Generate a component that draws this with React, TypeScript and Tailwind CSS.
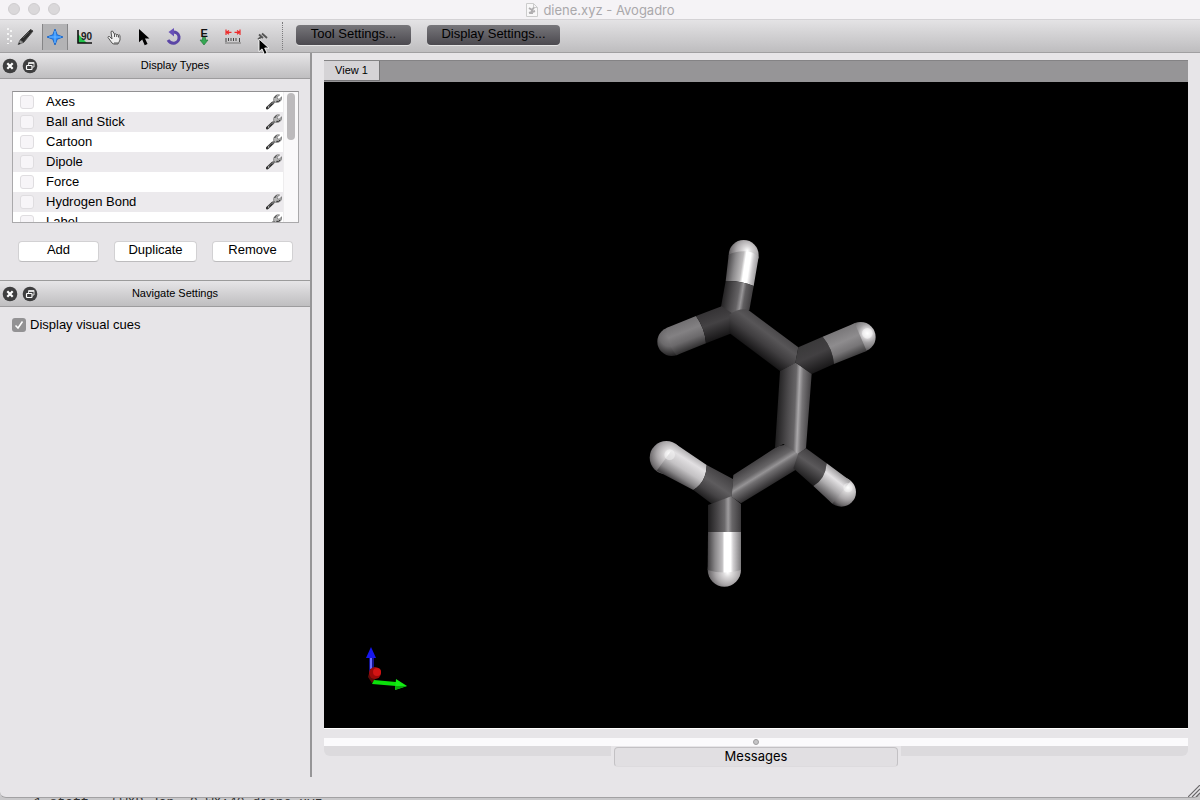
import React from "react";

const displayTypes = [
  { name: "Axes", settings: true },
  { name: "Ball and Stick", settings: true },
  { name: "Cartoon", settings: true },
  { name: "Dipole", settings: true },
  { name: "Force", settings: false },
  { name: "Hydrogen Bond", settings: true },
  { name: "Label", settings: true },
];

function Wrench() {
  return (
    <svg viewBox="0 0 48 48" className="h-4 w-4" aria-hidden="true">
      <path d="M4 42 L20 27" stroke="#333" strokeWidth="9" strokeLinecap="round" />
      <path d="M6 38 L19 26" stroke="#858585" strokeWidth="2" />
      <path d="M18 29 L30 19" stroke="#6b6b6b" strokeWidth="6" />
      <path d="M23 20 Q21 6 35 2 L41 3 L33 9 L35 15 L41 15 L47 8 Q50 18 40 24 Q32 26 28 25Z" fill="#b5b5b5" stroke="#6a6a6a" strokeWidth="2" />
      <path d="M26 12 Q28 7 32 5 M31 22 Q38 24 43 18" stroke="#2b2b2b" strokeWidth="3" fill="none" />
      <circle cx="8" cy="39" r="2" fill="#ddd" />
    </svg>
  );
}

function Arrow() {
  return <path d="M0 0 V14 L3.4 11 L6 17 L9 15.700 L6.300 10 H11 Z" />;
}

const tools: { name: string; icon: React.ReactNode; active?: boolean }[] = [
  {
    name: "Draw",
    icon: (
      <>
        <path d="M6 14 L16.500 3.500 L19 5 L9.500 16.500Z" fill="#2c2c2c" stroke="#444" />
        <path d="M9 12 L15 6" stroke="#555" strokeWidth="1" />
        <path d="M6 14 L9.500 16.500 L4 18.500Z" fill="#999" stroke="#555" strokeWidth=".7" />
        <path d="M4 18.500 L5.500 16.500 L6.500 18Z" fill="#222" />
      </>
    ),
  },
  {
    name: "Navigate",
    active: true,
    icon: (
      <>
        <path d="M11 3 L13.200 8.800 L19 11 L13.200 13.200 L11 19 L8.800 13.200 L3 11 L8.800 8.800Z" fill="#2e8dfa" stroke="#1763c5" strokeWidth=".9" />
        <path d="M11 5 V17 M5 11 H17" stroke="#65b4ff" strokeWidth="1.2" />
      </>
    ),
  },
  {
    name: "Bond centric manipulation",
    icon: (
      <>
        <path d="M4 8 L13 17 H4Z" fill="#22c24b" />
        <path d="M4 4 V17 H18" fill="none" stroke="#111" strokeWidth="1.600" />
        <text x="7" y="13.500" fontSize="10" fontWeight="bold" fill="#222" fontFamily="Liberation Sans, sans-serif">90</text>
      </>
    ),
  },
  {
    name: "Manipulate",
    icon: (
      <>
        <path d="M9 13 L6.500 10.500 Q5 10 5 11.500 L9 17 Q10 18 11 18 H15 L17 14 V9.500 Q16.500 8.500 15.500 9.300 Q15 8 13.700 8.600 Q13 7.500 11.500 8 L9.500 5 Q8.500 4.500 8 6Z" fill="#eee" stroke="#555" />
        <path d="M11.500 8 V11 M13.700 8.600 V11 M15.500 9.300 V11.500 M11 17 H15" stroke="#555" />
      </>
    ),
  },
  { name: "Select", icon: <g transform="translate(6 3) scale(.95)"><Arrow /></g> },
  {
    name: "Auto rotate",
    icon: (
      <>
        <path d="M5 14 Q7.500 18 12 17 Q16.500 15.500 16 10.500 Q15 6 10 6" fill="none" stroke="#5b46a6" strokeWidth="3" />
        <path d="M11 2 V10.500 L5.500 6Z" fill="#6851b8" />
      </>
    ),
  },
  {
    name: "Auto optimization",
    icon: (
      <>
        <text x="7.500" y="10.500" fontSize="11" fontWeight="bold" fill="#111" fontFamily="Liberation Sans, sans-serif">E</text>
        <path d="M9.500 11.500 H12.500 V14 H15 L11 19 L7 14 H9.500Z" fill="#35a853" stroke="#267a3c" strokeWidth=".7" />
      </>
    ),
  },
  {
    name: "Measure",
    icon: (
      <>
        <path d="M4 3.500 V9 M18 3.500 V9 M4 6.300 H9.500 M12.500 6.300 H18 M7 4.500 L4.500 6.300 L7 8.200 M15 4.500 L17.500 6.300 L15 8.200" fill="none" stroke="#ed2b2b" strokeWidth="1.200" />
        <path d="M4 12 V16 M6.500 12 V15 M9 12 V15 M11.500 12 V15 M14 12 V15 M17.500 12 V16" stroke="#444" />
        <path d="M3 17 H19" stroke="#777" />
      </>
    ),
  },
  {
    name: "Align",
    icon: (
      <path d="M7 8.500 L11 12 M10 7.500 L15 12 M6 13.500 L9 11" stroke="#555" strokeWidth="1.800" />
    ),
  },
];

function DockHeader({ title }: { title: string }) {
  return (
    <header className="flex h-[26px] shrink-0 items-center border-b border-b-[#9d9c9e] bg-linear-to-b from-[#e6e5e7] to-[#bfbec0] px-[2px]">
      <button aria-label={"Close " + title} className="mr-1 h-4 w-4">
        <svg viewBox="0 0 16 16">
          <circle cx="8" cy="8" r="7.300" fill="#3e3e3f" />
          <path d="M5.300 5.300 L10.700 10.700 M10.700 5.300 L5.300 10.700" stroke="white" strokeWidth="2.200" />
        </svg>
      </button>
      <button aria-label={"Detach " + title} className="h-4 w-4">
        <svg viewBox="0 0 16 16">
          <circle cx="8" cy="8" r="7.300" fill="#3e3e3f" />
          <path d="M6.500 7 V4.500 H12 V9 H10.500 M6.500 5.500 H12" fill="none" stroke="#ddd" />
          <rect x="4.500" y="7.500" width="5.500" height="4" rx=".7" fill="#3e3e3f" stroke="white" strokeWidth="1.200" />
        </svg>
      </button>
      <h2 className="flex-1 pl-1 text-center text-[11px]">{title}</h2>
    </header>
  );
}

type Stop = [number, string];

function Shade({ id, at, stops }: { id: string; at: [number, number, number, number]; stops: Stop[] }) {
  return (
    <linearGradient id={id} gradientUnits="userSpaceOnUse" x1={at[0]} y1={at[1]} x2={at[2]} y2={at[3]}>
      {stops.map(([offset, color]) => <stop key={offset} offset={offset} stopColor={color} />)}
    </linearGradient>
  );
}

function Glow({ id, at, stops }: { id: string; at: [number, number, number]; stops: Stop[] }) {
  return (
    <radialGradient id={id} gradientUnits="userSpaceOnUse" cx={at[0]} cy={at[1]} r={at[2]}>
      {stops.map(([offset, color]) => <stop key={offset} offset={offset} stopColor={color} />)}
    </radialGradient>
  );
}

const ball: Stop[] = [[0, "#fff"], [0.2, "#dcdadb"], [0.55, "#aaa7a9"], [0.85, "#6d6a6c"], [1, "#3a383a"]];

function Molecule() {
  return (
    <g transform="translate(316 148) scale(.33333)">
      <defs>
        <Shade id="h1" at={[260, 110, 351, 124]} stops={[[0, "#454345"], [0.25, "#8c8a8c"], [0.48, "#bdbbbc"], [0.57, "#fff"], [0.72, "#fff"], [0.84, "#c9c7c9"], [1, "#969496"]]} />
        <Shade id="c1" at={[249, 192, 334, 206]} stops={[[0, "#232223"], [0.3, "#4b494b"], [0.52, "#656365"], [0.65, "#989698"], [0.76, "#605e60"], [1, "#413f41"]]} />
        <Shade id="h2" at={[121, 276, 154, 360]} stops={[[0, "#716f71"], [0.35, "#838183"], [0.65, "#6b696b"], [1, "#2c2b2c"]]} />
        <Shade id="c2" at={[207, 243, 237, 325]} stops={[[0, "#353335"], [0.45, "#444244"], [1, "#171617"]]} />
        <Shade id="cc1" at={[398, 295, 345, 366]} stops={[[0, "#4b494b"], [0.25, "#585658"], [0.6, "#403e40"], [1, "#181718"]]} />
        <Shade id="h3" at={[601, 298, 638, 382]} stops={[[0, "#797779"], [0.4, "#8e8c8e"], [0.7, "#777577"], [1, "#3a393a"]]} />
        <Shade id="c3" at={[510, 335, 548, 420]} stops={[[0, "#3a393a"], [0.45, "#424042"], [1, "#171617"]]} />
        <Shade id="cc2" at={[414, 510, 511, 514]} stops={[[0, "#232223"], [0.3, "#4b494b"], [0.53, "#676567"], [0.64, "#aaa8aa"], [0.75, "#777577"], [1, "#424042"]]} />
        <Shade id="cc3" at={[355, 690, 402, 766]} stops={[[0, "#454345"], [0.3, "#676567"], [0.45, "#959395"], [0.56, "#706e70"], [0.8, "#454345"], [1, "#212021"]]} />
        <Shade id="h4" at={[155, 670, 103, 752]} stops={[[0, "#aaa8aa"], [0.25, "#e2e0e2"], [0.55, "#c4c2c4"], [0.8, "#898789"], [1, "#403e40"]]} />
        <Shade id="c4" at={[241, 728, 189, 805]} stops={[[0, "#454345"], [0.4, "#5e5c5e"], [0.7, "#454345"], [1, "#1c1b1c"]]} />
        <Shade id="h5" at={[203, 960, 303, 960]} stops={[[0, "#403e40"], [0.22, "#898789"], [0.44, "#c0bec0"], [0.5, "#fff"], [0.69, "#fff"], [0.76, "#d3d1d3"], [1, "#7d7b7d"]]} />
        <Shade id="c5" at={[204, 850, 303, 850]} stops={[[0, "#1e1d1e"], [0.3, "#4b494b"], [0.5, "#6b696b"], [0.61, "#9e9c9e"], [0.73, "#686668"], [1, "#3c3a3c"]]} />
        <Shade id="h6" at={[603, 728, 548, 798]} stops={[[0, "#969496"], [0.3, "#e4e2e4"], [0.6, "#aeacae"], [1, "#4b494b"]]} />
        <Shade id="c6" at={[529, 675, 484, 742]} stops={[[0, "#424042"], [0.4, "#5b595b"], [1, "#1d1c1d"]]} />
        <Glow id="b1" at={[322, 62, 60]} stops={ball} />
        <Glow id="b2" at={[88, 320, 58]} stops={[[0, "#858385"], [0.5, "#6b696b"], [1, "#252425"]]} />
        <Glow id="b3" at={[682, 310, 62]} stops={[[0, "#fff"], [0.18, "#e6e4e6"], [0.45, "#a3a1a3"], [0.65, "#858385"], [1, "#3a383a"]]} />
        <Glow id="b4" at={[89, 672, 70]} stops={ball} />
        <Glow id="b5" at={[263, 1028, 66]} stops={ball} />
        <Glow id="b6" at={[624, 773, 64]} stops={ball} />
      </defs>
      <circle cx="311" cy="75" r="45" fill="url(#b1)" />
      <path d="M266 75 L257 153 Q300 151 341 168 L356 80 Q340 66 322 64 Q285 62 266 75Z" fill="url(#h1)" />
      <path d="M257 153 Q300 151 341 168 L328 240 L275 262 L243 230Z" fill="url(#c1)" />
      <circle cx="95" cy="335" r="43" fill="url(#b2)" />
      <path d="M79 294 L168 258 Q195 296 198 340 L109 376 Q82 343 79 294Z" fill="url(#h2)" />
      <path d="M168 258 L245 229 L280 252 L275 310 L198 340 Q195 296 168 258Z" fill="url(#c2)" />
      <path d="M268 254 Q290 236 322 238 L475 352 L466 400 L420 423 L268 309Z" fill="url(#cc1)" />
      <path d="M475 352 L548 320 Q578 356 582 402 L515 432 L466 397Z" fill="url(#c3)" />
      <circle cx="662" cy="321" r="45" fill="url(#b3)" />
      <path d="M548 320 L644 280 L680 363 L582 402 Q578 356 548 320Z" fill="url(#h3)" />
      <circle cx="682" cy="310" r="16" fill="#fff" opacity=".45" />
      <path d="M404 655 Q435 632 476 662 L475 715 L303 820 L274 800 L280 735Z" fill="url(#cc3)" />
      <path d="M420 423 L467 398 L515 432 L498 655 L475 672 L430 642 L405 655Z" fill="url(#cc2)" />
      <path d="M498 655 L560 700 Q556 748 520 768 L460 715 L475 670Z" fill="url(#c6)" />
      <circle cx="604" cy="786" r="44" fill="url(#b6)" />
      <path d="M560 700 L632 753 L577 821 L520 768 Q556 748 560 700Z" fill="url(#h6)" />
      <circle cx="624" cy="773" r="14" fill="#fff" opacity=".35" />
      <circle cx="79" cy="683" r="50" fill="url(#b4)" />
      <path d="M108 643 L200 705 Q199 756 160 780 L50 722Z" fill="url(#h4)" />
      <circle cx="89" cy="674" r="16" fill="#fff" opacity=".4" />
      <path d="M200 705 L280 748 L275 801 L216 822 L160 780 Q199 756 200 705Z" fill="url(#c4)" />
      <path d="M204 825 L274 799 L303 822 V906 H204Z" fill="url(#c5)" />
      <circle cx="253" cy="1020" r="50" fill="url(#b5)" />
      <path d="M204 906 H303 V1020 Q253 1035 203 1020Z" fill="url(#h5)" />
    </g>
  );
}

function Axes() {
  return (
    <g transform="translate(46 565)">
      <path d="M-1 7 H4 V23 L1 28 H-1Z" fill="#13138e" />
      <path d="M1 8 V22" stroke="#6a6aff" strokeWidth="2" />
      <path d="M1 0 L6 11 H-4Z" fill="#1717ef" />
      <path d="M-2 30 Q-1 24 3 23 L6 31 L2 36Z" fill="#5c0b09" />
      <circle cx="5" cy="26" r="6" fill="#9c0909" />
      <circle cx="7" cy="25" r="4" fill="#d31414" />
      <path d="M4 33 L26 35 V39 L2 37Z" fill="#0bdf0b" />
      <path d="M26 32 L37 39 L25 43Z" fill="#13ed13" />
      <path d="M26 39 H37 L25 43Z" fill="#0ca90c" />
    </g>
  );
}

const pushButton = "h-[21px] rounded-[4px] border border-[#d2d1d3] border-b-[#bdbcbe] bg-white pb-[3px] text-[13px] leading-4";
const darkButton = "h-5 rounded-[4px] bg-linear-to-b from-[#78777b] to-[#4c4a50] pb-0.5 text-[13px] leading-4 shadow-[0_1px_0_#e5e5e5]";

export default function App() {
  return (
    <div className="flex h-screen flex-col overflow-hidden bg-[#c9c8ca] font-['Liberation_Sans',Arial,sans-serif] text-black">
      <div className="flex min-h-0 flex-1 flex-col overflow-hidden rounded-b-md border-b border-[#a2a1a3] bg-[#e7e5e8]">
        <div className="flex h-5 shrink-0 items-center border-b border-[#d4d2d5] bg-[#f5f3f6]">
          <div className="flex w-25 gap-2 pb-[2px] pl-2">
            {["Close", "Minimize", "Zoom"].map((name) => (
              <button key={name} aria-label={name} className="h-3 w-3 rounded-full border border-[#cfcdcf] bg-[#dad8da]" />
            ))}
          </div>
          <h1 className="flex flex-1 items-center justify-center gap-1 font-[Inter,sans-serif] text-[13px] leading-4 text-[#aaa8ab]">
            <svg viewBox="0 0 14 16" className="h-4 w-3.5" aria-hidden="true">
              <path d="M1.500 1.500 H8.500 L12.500 5.500 V14.500 H1.500Z M8.500 1.500 V5.500 H12.500" fill="#f8f7f8" stroke="#ccc" />
              <path d="M4 6 L7 8 L9 5.500 M7 8 V12 M4 11 L10 9" fill="none" stroke="#b0aeb0" strokeWidth="2" />
            </svg>
            diene.xyz - Avogadro
          </h1>
          <div className="w-25" />
        </div>

        <div className="relative flex h-[33px] shrink-0 items-center border-b border-[#a09fa1] bg-linear-to-b from-[#e4e3e5] to-[#bebdbf]" role="toolbar" aria-label="Tools">
          <svg viewBox="0 0 12 20" className="h-5 w-3 shrink-0" aria-hidden="true">
            <path d="M8 2 V18 M11 4 V19" stroke="#f4f4f4" strokeWidth="2" strokeDasharray="2 3" />
          </svg>
          <div className="flex w-66 justify-between pt-px">
            {tools.map((tool) => (
              <button
                key={tool.name}
                aria-label={tool.name}
                className={tool.active ? "flex h-[26px] w-[26px] items-center justify-center border-x border-[#858587] bg-[#b3b3b5]" : "flex h-[26px] w-[26px] items-center justify-center"}
              >
                <svg viewBox="0 0 22 22" className="h-[22px] w-[22px] shrink-0">{tool.icon}</svg>
              </button>
            ))}
          </div>
          <div className="ml-[6px] h-7 border-l border-dotted border-[#7b7a7c]" />
          <div className="ml-[13px] flex gap-4 pb-[3px]">
            <button className={darkButton + " w-[115px]"}>Tool Settings...</button>
            <button className={darkButton + " w-[133px]"}>Display Settings...</button>
          </div>
          <svg viewBox="0 0 12 18" className="absolute top-[18px] left-[258px] h-[18px] w-3" aria-hidden="true">
            <g stroke="white" strokeWidth="1" transform="translate(1 1) scale(.9)"><Arrow /></g>
          </svg>
        </div>

        <div className="flex min-h-0 flex-1">
          <aside className="mb-5 flex w-[312px] shrink-0 flex-col border-r-2 border-[#969597]">
            <DockHeader title="Display Types" />
            <div className="flex flex-col border-b border-[#9b9b9b] px-3 pt-3 pb-[18px]">
              <div className="flex h-[132px] w-[287px] overflow-hidden border border-[#aaa9ab] border-t-[#929193] bg-white">
                <ul className="flex-1">
                  {displayTypes.map((type, i) => (
                    <li key={type.name} className={i % 2 ? "flex h-5 items-center bg-[#eceaed] pl-[7px]" : "flex h-5 items-center bg-white pl-[7px]"}>
                      <label className="flex flex-1 items-center gap-3 text-[13px] leading-5">
                        <input type="checkbox" className="h-3.5 w-3.5 appearance-none rounded-[3px] border border-[#dfdde0] bg-[#f7f5f8]" />
                        {type.name}
                      </label>
                      {type.settings && (
                        <button aria-label={type.name + " settings"} className="mr-px"><Wrench /></button>
                      )}
                    </li>
                  ))}
                </ul>
                <div className="w-[15px] border-l border-[#eeedee] bg-[#faf9fa] pt-px pl-[3px]">
                  <div className="h-[47px] w-2 rounded-full bg-[#bcbabc]" />
                </div>
              </div>
              <div className="mt-[18px] flex gap-[15px] pl-[6px]">
                <button className={pushButton + " w-[81px]"}>Add</button>
                <button className={pushButton + " w-[83px]"}>Duplicate</button>
                <button className={pushButton + " w-[81px]"}>Remove</button>
              </div>
            </div>
            <DockHeader title="Navigate Settings" />
            <label className="flex items-center gap-1 px-3 pt-2 text-[13px] leading-5">
              <span className="grid h-3.5 w-3.5">
                <input type="checkbox" defaultChecked className="col-start-1 row-start-1 h-3.5 w-3.5 appearance-none rounded-[3px] bg-[#939294]" />
                <svg viewBox="0 0 14 14" className="pointer-events-none col-start-1 row-start-1 h-3.5 w-3.5" aria-hidden="true">
                  <path d="M3.500 7.500 L6 10 L10.500 3.500" fill="none" stroke="white" strokeWidth="1.500" />
                </svg>
              </span>
              Display visual cues
            </label>
          </aside>

          <main className="flex min-w-0 flex-1 flex-col pt-[7px] pr-3 pl-3">
            <div className="flex h-[22px] shrink-0 border-t border-[#848385] bg-[#969597]" role="tablist">
              <button role="tab" aria-selected="true" className="h-5 w-14 border-r border-b border-[#777678] bg-[#d5d3d6] text-[11px]">View 1</button>
            </div>
            <div className="min-h-0 flex-1 border-b border-white bg-black">
              <svg viewBox="0 0 864 646" className="h-full w-full" role="img" aria-label="diene molecule">
                <Molecule />
                <Axes />
              </svg>
            </div>
            <div className="mt-[9px] flex h-2 shrink-0 items-center justify-center bg-[#fbfafc]">
              <div className="h-[6px] w-[6px] rounded-full border border-[#9e9d9f] bg-[#c5c4c6]" />
            </div>
            <div className="mb-[30px] flex h-[21px] shrink-0">
              <div className="h-[10px] flex-1 rounded-bl-md bg-[#dcdadd]" />
              <button className="mx-[3px] mt-px h-5 w-[284px] rounded-[4px] border border-[#c3c1c4] border-b-[#dddbde] bg-[#e1dfe2] pb-0.5 font-[Inter,sans-serif] text-[13px] leading-4">Messages</button>
              <div className="h-[10px] flex-1 rounded-br-md bg-[#dcdadd]" />
            </div>
          </main>
        </div>
        <svg viewBox="0 0 12 12" className="absolute right-0 bottom-[3px] h-3 w-3" aria-hidden="true">
          <path d="M0 12 L12 0 M4 12 L12 4 M8 12 L12 8" stroke="#69686a" strokeWidth="1.200" />
        </svg>
      </div>
      <div className="h-0.5 shrink-0 overflow-hidden pl-[34px]">
        <pre className="-mt-[3px] font-['Liberation_Mono',monospace] text-[13px] leading-4 text-[#333]">1 staff   5WXR Jan  9 WX:40 diene.xyz</pre>
      </div>
    </div>
  );
}
